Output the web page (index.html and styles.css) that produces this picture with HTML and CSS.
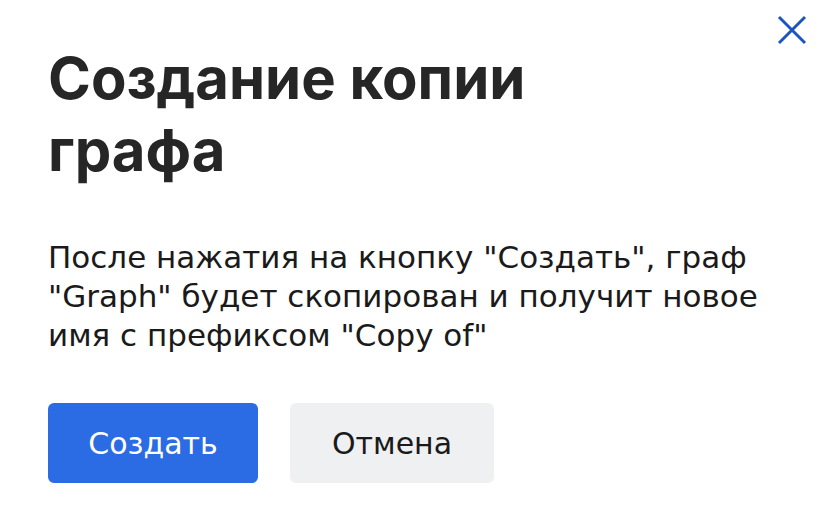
FILE: index.html
```html
<!DOCTYPE html>
<html lang="ru">
<head>
    <meta charset="UTF-8">
    <meta name="viewport" content="width=device-width, initial-scale=1.0">
    <title>Создание копии графа</title>
    <link rel="stylesheet" href="styles.css">
</head>
<body>
    <div class="dialog">
        <button class="close" type="button" aria-label="Закрыть">
            <svg width="30" height="30" viewBox="0 0 30 30">
                <path d="M2 2 L28 28 M28 2 L2 28" stroke="#1d55c0" stroke-width="3" fill="none"/>
            </svg>
        </button>
        <h1 class="title">Создание копии графа</h1>
        <p class="text">После нажатия на кнопку "Создать", граф "Graph" будет скопирован и получит новое имя с префиксом "Copy of"</p>
        <div class="actions">
            <button class="btn btn-primary" type="button">Создать</button>
            <button class="btn btn-secondary" type="button">Отмена</button>
        </div>
    </div>
</body>
</html>
```

FILE: styles.css
```css
body {
    margin: 0;
    background-color: white;
    font-family: "DejaVu Sans", sans-serif;
}

.dialog {
    position: relative;
    width: 838px;
    height: 522px;
    box-sizing: border-box;
    padding: 42px 48px 0 48px;
}

.close {
    position: absolute;
    top: 15px;
    right: 31px;
    padding: 0;
    border: none;
    background: none;
    cursor: pointer;
}

.close svg {
    display: block;
}

.title {
    margin: 0;
    width: 560px;
    font-family: Inter, sans-serif;
    font-size: 58px;
    font-weight: 700;
    line-height: 72px;
    color: #262626;
}

.text {
    margin: 52px 0 0 0;
    width: 742px;
    font-size: 31px;
    line-height: 39px;
    color: #1a1a1a;
}

.actions {
    display: flex;
    gap: 32px;
    margin-top: 48px;
}

.btn {
    height: 80px;
    border: none;
    border-radius: 6px;
    font-family: "DejaVu Sans", sans-serif;
    font-size: 30px;
    cursor: pointer;
}

.btn-primary {
    width: 210px;
    background-color: #2b6be3;
    color: white;
}

.btn-secondary {
    width: 204px;
    background-color: #eff0f2;
    color: #1a1a1a;
}
```
